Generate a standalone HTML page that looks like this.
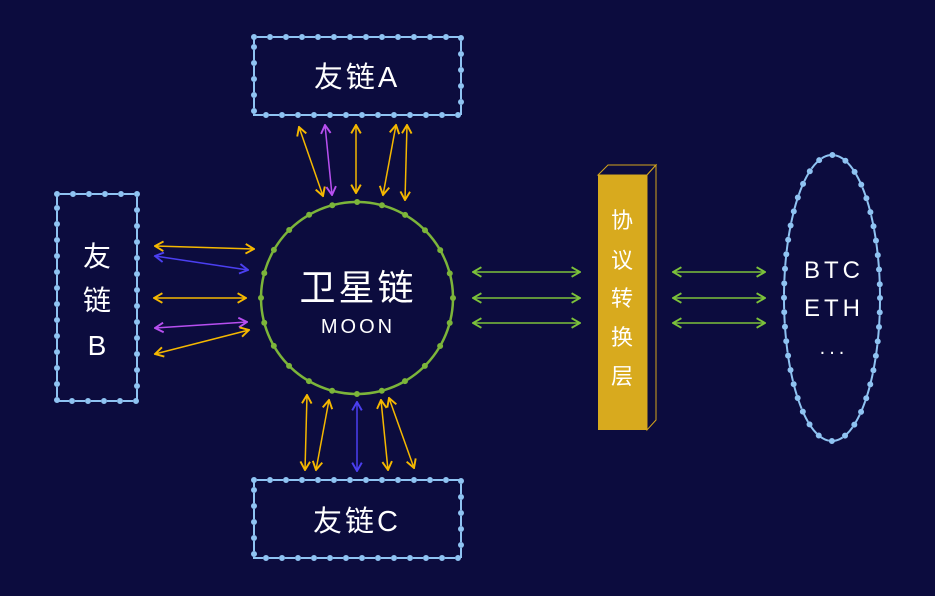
<!DOCTYPE html>
<html><head><meta charset="utf-8"><style>
html,body{margin:0;padding:0;background:#0c0c3e;}
svg{display:block}
text{font-family:"Liberation Sans","Noto Sans CJK SC",sans-serif;fill:#fff}
</style></head><body>
<svg width="935" height="596" viewBox="0 0 935 596" xmlns="http://www.w3.org/2000/svg">
<defs>
<marker id="ay" viewBox="0 0 10 10" refX="9" refY="5" markerWidth="8" markerHeight="8" orient="auto-start-reverse"><path d="M2,1 L9,5 L2,9" fill="none" stroke="#f5b800" stroke-width="1.6"/></marker>
<marker id="ab" viewBox="0 0 10 10" refX="9" refY="5" markerWidth="8" markerHeight="8" orient="auto-start-reverse"><path d="M2,1 L9,5 L2,9" fill="none" stroke="#4b3ff0" stroke-width="1.6"/></marker>
<marker id="ap" viewBox="0 0 10 10" refX="9" refY="5" markerWidth="8" markerHeight="8" orient="auto-start-reverse"><path d="M2,1 L9,5 L2,9" fill="none" stroke="#b84ff0" stroke-width="1.6"/></marker>
<marker id="ag" viewBox="0 0 10 10" refX="9" refY="5" markerWidth="8" markerHeight="8" orient="auto-start-reverse"><path d="M2,1 L9,5 L2,9" fill="none" stroke="#7cc23a" stroke-width="1.6"/></marker>
</defs>
<g fill="none" stroke="#8fc3f2">
<rect x="254" y="37" width="207" height="78" stroke-width="2" stroke-dasharray="10 6" stroke-dashoffset="-3"/>
<rect x="254" y="37" width="207" height="78" stroke-width="6" stroke-dasharray="0 16" stroke-linecap="round"/>
<rect x="254" y="480" width="207" height="78" stroke-width="2" stroke-dasharray="10 6" stroke-dashoffset="-3"/>
<rect x="254" y="480" width="207" height="78" stroke-width="6" stroke-dasharray="0 16" stroke-linecap="round"/>
<rect x="57" y="194" width="80" height="207" stroke-width="2" stroke-dasharray="10 6" stroke-dashoffset="-3"/>
<rect x="57" y="194" width="80" height="207" stroke-width="6" stroke-dasharray="0 16" stroke-linecap="round"/>
<ellipse cx="832" cy="298" rx="48" ry="143" stroke-width="2" stroke-dasharray="9 5.5" stroke-dashoffset="-3"/>
<ellipse cx="832" cy="298" rx="48" ry="143" stroke-width="6" stroke-dasharray="0 14.5" stroke-linecap="round"/>
</g>
<g fill="none" stroke="#7cb53a">
<circle cx="357" cy="298" r="96" stroke-width="2.5" stroke-dasharray="20 5.13" stroke-dashoffset="-2.5"/>
<circle cx="357" cy="298" r="96" stroke-width="6" stroke-dasharray="0 25.13" stroke-linecap="round"/>
</g>
<polygon points="598,175 608,165 656,165 647,175" fill="none" stroke="#d4a41c" stroke-width="1"/>
<polygon points="647,175 656,165 656,420 647,430" fill="#0c0c3e" stroke="#d4a41c" stroke-width="1"/>
<rect x="598" y="175" width="49" height="255" fill="#d8aa1e"/>
<g font-size="22" text-anchor="middle">
<text x="622" y="228">协</text><text x="622" y="268">议</text><text x="622" y="306">转</text><text x="622" y="345">换</text><text x="622" y="384">层</text>
</g>
<g stroke-width="1.5" fill="none">
<line x1="299" y1="127" x2="323" y2="196" stroke="#f5b800" marker-start="url(#ay)" marker-end="url(#ay)"/>
<line x1="325" y1="125" x2="332" y2="195" stroke="#b84ff0" marker-start="url(#ap)" marker-end="url(#ap)"/>
<line x1="356" y1="125" x2="356" y2="193" stroke="#f5b800" marker-start="url(#ay)" marker-end="url(#ay)"/>
<line x1="396" y1="125" x2="383" y2="195" stroke="#f5b800" marker-start="url(#ay)" marker-end="url(#ay)"/>
<line x1="407" y1="125" x2="405" y2="200" stroke="#f5b800" marker-start="url(#ay)" marker-end="url(#ay)"/>
<line x1="307" y1="395" x2="305" y2="470" stroke="#f5b800" marker-start="url(#ay)" marker-end="url(#ay)"/>
<line x1="329" y1="400" x2="316" y2="470" stroke="#f5b800" marker-start="url(#ay)" marker-end="url(#ay)"/>
<line x1="357" y1="402" x2="357" y2="471" stroke="#4b3ff0" marker-start="url(#ab)" marker-end="url(#ab)"/>
<line x1="381" y1="400" x2="388" y2="470" stroke="#f5b800" marker-start="url(#ay)" marker-end="url(#ay)"/>
<line x1="389" y1="398" x2="414" y2="468" stroke="#f5b800" marker-start="url(#ay)" marker-end="url(#ay)"/>
<line x1="155" y1="246" x2="254" y2="249" stroke="#f5b800" marker-start="url(#ay)" marker-end="url(#ay)"/>
<line x1="155" y1="256" x2="248" y2="270" stroke="#4b3ff0" marker-start="url(#ab)" marker-end="url(#ab)"/>
<line x1="154" y1="298" x2="246" y2="298" stroke="#f5b800" marker-start="url(#ay)" marker-end="url(#ay)"/>
<line x1="155" y1="328" x2="247" y2="322" stroke="#b84ff0" marker-start="url(#ap)" marker-end="url(#ap)"/>
<line x1="155" y1="354" x2="249" y2="330" stroke="#f5b800" marker-start="url(#ay)" marker-end="url(#ay)"/>
<g stroke="#7cc23a">
<line x1="473" y1="272" x2="580" y2="272" marker-start="url(#ag)" marker-end="url(#ag)"/>
<line x1="473" y1="298" x2="580" y2="298" marker-start="url(#ag)" marker-end="url(#ag)"/>
<line x1="473" y1="323" x2="580" y2="323" marker-start="url(#ag)" marker-end="url(#ag)"/>
<line x1="673" y1="272" x2="765" y2="272" marker-start="url(#ag)" marker-end="url(#ag)"/>
<line x1="673" y1="298" x2="765" y2="298" marker-start="url(#ag)" marker-end="url(#ag)"/>
<line x1="673" y1="323" x2="765" y2="323" marker-start="url(#ag)" marker-end="url(#ag)"/>
</g>
</g>
<text x="357" y="87" font-size="29" text-anchor="middle" letter-spacing="3">友链A</text>
<text x="357" y="531" font-size="29" text-anchor="middle" letter-spacing="3">友链C</text>
<g font-size="28" text-anchor="middle">
<text x="97" y="266">友</text><text x="97" y="310">链</text><text x="97" y="355">B</text>
</g>
<text x="358" y="300" font-size="36" text-anchor="middle" letter-spacing="3">卫星链</text>
<text x="358" y="333" font-size="20" text-anchor="middle" letter-spacing="3">MOON</text>
<g font-size="24" text-anchor="middle" letter-spacing="4">
<text x="834" y="278">BTC</text><text x="834" y="316">ETH</text><text x="834" y="354" font-size="20">...</text>
</g>
</svg>
</body></html>
